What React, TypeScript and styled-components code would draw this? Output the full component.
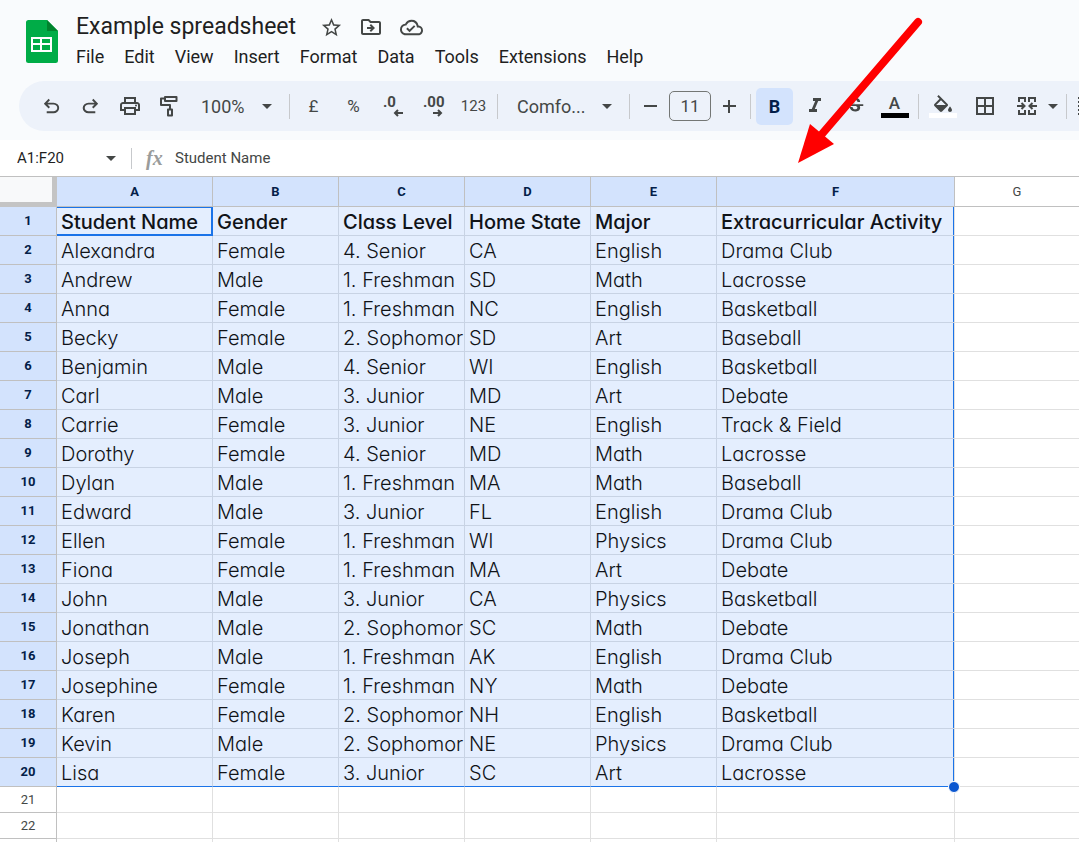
import React from "react";
import styled, { createGlobalStyle, css } from "styled-components";
import {
  MdBorderAll,
  MdFormatItalic,
  MdOutlineCloudDone,
  MdOutlineDriveFileMove,
  MdOutlinePrint,
  MdStarOutline,
  MdStrikethroughS,
} from "react-icons/md";

const ui = `Roboto, "Open Sans", sans-serif`;
const cellFont = `Inter, "Open Sans", sans-serif`;
const ink = "#444746";
const accent = "#1a73e8";
const tint = "#d3e3fd";

const GlobalStyle = createGlobalStyle`
  *, *::before, *::after { box-sizing: border-box; }
  body { margin: 0; background: #fff; font-family: ${ui}; color: #1f1f1f; }
  button, input, select { font: inherit; color: inherit; border: 0; margin: 0; padding: 0; background: transparent; }
  h1 { margin: 0; font-weight: 400; }
`;

const Page = styled.div`
  position: relative;
  display: flex;
  flex-direction: column;
  height: 100vh;
  overflow: hidden;
`;

const Chrome = styled.header`
  background: #f9fbfd;
  padding-bottom: 9px;
`;

const TitleBar = styled.div`
  display: flex;
  align-items: flex-start;
  gap: 8px;
  height: 81px;
  padding: 12px 16px 0 24px;
`;

const Logo = styled.svg`
  width: 36px;
  height: 60px;
  flex: none;
`;

const TitleColumn = styled.div`
  display: flex;
  flex-direction: column;
`;

const TitleRow = styled.div`
  display: flex;
  align-items: center;
  height: 30px;
  padding-left: 8px;
  gap: 15px;
`;

const Title = styled.h1`
  font-size: 23px;
  line-height: 28px;
`;

const TitleActions = styled.div`
  display: flex;
`;

const TitleAction = styled.button`
  display: grid;
  place-items: center;
  width: 40px;
  height: 30px;
  color: ${ink};
`;

const MenuBar = styled.nav`
  display: flex;
  height: 30px;
`;

const MenuButton = styled.button`
  padding: 0 12px 0 8px;
  font-size: 18px;
  line-height: 30px;
`;

const Toolbar = styled.div`
  display: flex;
  align-items: center;
  height: 50px;
  margin-left: 19px;
  padding-left: 14px;
  border-radius: 25px 0 0 25px;
  background: #edf2fa;
  color: ${ink};
  overflow: hidden;
`;

const Group = styled.div<{ $gap?: number }>`
  display: flex;
  align-items: center;
  flex: none;
  gap: ${(p) => p.$gap ?? 3}px;
`;

const Separator = styled.span`
  flex: none;
  width: 1px;
  height: 25px;
  margin: 0 5px;
  background: #c7c9cc;
`;

const ToolButton = styled.button<{ $active?: boolean; $size?: number; $narrow?: boolean }>`
  display: flex;
  flex-direction: column;
  align-items: center;
  justify-content: center;
  flex: none;
  width: ${(p) => (p.$narrow ? 16 : 37)}px;
  height: 37px;
  border-radius: 5px;
  font-size: ${(p) => p.$size ?? 15}px;
  ${(p) =>
    p.$active &&
    css`
      background: ${tint};
      color: #041e49;
      font-weight: 700;
    `}
`;

const Picker = styled.label<{ $width: number }>`
  display: flex;
  align-items: center;
  flex: none;
  width: ${(p) => p.$width}px;
  height: 37px;
  padding: 0 12px 0 14px;
`;

const Select = styled.select`
  appearance: none;
  flex: 1;
  min-width: 0;
  font-size: 18px;
  outline: 0;
`;

const SizeGroup = styled(Group)`
  padding: 0 1px;
`;

const SizeButton = styled.button`
  display: grid;
  place-items: center;
  width: 29px;
  height: 37px;
`;

const SizeInput = styled.input`
  width: 42px;
  height: 30px;
  border: 1px solid #747775;
  border-radius: 5px;
  font-size: 17px;
  text-align: center;
  color: ${ink};
`;

const Decimal = styled.span`
  align-self: flex-start;
  margin-left: 8px;
  font-size: 15px;
  font-weight: 700;
  line-height: 14px;
`;

const DecimalArrow = styled.svg`
  width: 10px;
  height: 8px;
  align-self: flex-end;
  margin-right: 9px;
`;

const ColourBar = styled.span<{ $colour: string }>`
  flex: none;
  width: 28px;
  height: 5px;
  background: ${(p) => p.$colour};
`;

const ColourLetter = styled.span`
  font-size: 17px;
  font-weight: 500;
  line-height: 19px;
`;

const FormulaBar = styled.div`
  display: flex;
  align-items: center;
  height: 37px;
  border-bottom: 1px solid #c0c0c0;
  font-size: 15px;
  background: #fff;
`;

const NameBox = styled.input`
  width: 82px;
  margin-left: 17px;
  font-size: 15px;
  color: #1f1f1f;
`;

const NameMenu = styled.button`
  display: grid;
  place-items: center;
  width: 24px;
  height: 30px;
  color: ${ink};
`;

const FormulaSeparator = styled.span`
  width: 1px;
  height: 21px;
  margin: 0 14px 0 8px;
  background: #c7c9cc;
`;

const Fx = styled.label`
  width: 29px;
  font: italic 700 20px "Liberation Serif", serif;
  color: #9a9c9b;
`;

const FormulaInput = styled.input`
  flex: 1;
  font-size: 15px;
  color: ${ink};
`;

const GridArea = styled.main`
  flex: 1;
  min-height: 0;
  overflow: hidden;
`;

const Sheet = styled.table`
  width: 100%;
  table-layout: fixed;
  border-collapse: separate;
  border-spacing: 0;

  tr > :last-child {
    border-right-width: 0;
  }
`;

const Column = styled.col<{ $width?: number }>`
  width: ${(p) => (p.$width ? `${p.$width}px` : "auto")};
`;

const Corner = styled.td`
  height: 30px;
  padding: 0;
  background: #f8f9fa;
  border: solid #c4c4c4;
  border-width: 0 5px 5px 0;
`;

const HeadCell = styled.th<{ $selected?: boolean }>`
  padding: 0;
  border: solid #c0c0c0;
  border-width: 0 1px 1px 0;
  font-size: 13px;
  line-height: 16px;
  text-align: center;
  font-weight: ${(p) => (p.$selected ? 700 : 400)};
  color: ${(p) => (p.$selected ? "#041e49" : ink)};
  background: ${(p) => (p.$selected ? tint : "#fff")};
`;

const Cell = styled.td<{ $selected?: boolean; $heading?: boolean; $active?: boolean; $right?: boolean; $bottom?: boolean }>`
  position: relative;
  height: ${(p) => (p.$selected ? 29 : 26)}px;
  padding: ${(p) => (p.$selected ? "2px 0 0 4px" : "0")};
  border: solid ${(p) => (p.$selected ? "#c8d3e4" : "#e0e0e0")};
  border-width: 0 1px 1px 0;
  background: ${(p) => (p.$selected ? "#e4eefe" : "#fff")};
  font-family: ${cellFont};
  font-feature-settings: "cv11";
  font-size: 20px;
  line-height: 24px;
  font-weight: ${(p) => (p.$heading ? 500 : 300)};
  color: #101318;
  white-space: nowrap;
  ${(p) => p.$right && css`box-shadow: inset -1px 0 ${accent}; border-right-color: #e0e0e0;`}
  ${(p) => p.$bottom && css`border-bottom-color: ${accent};`}
  ${(p) =>
    p.$active &&
    css`
      border-color: ${accent};
      box-shadow: inset -1px -1px ${accent}, inset 0 1px ${accent};
    `}
`;

const CellText = styled.div`
  overflow: hidden;
`;

const FillHandle = styled.span`
  position: absolute;
  z-index: 1;
  right: -6px;
  bottom: -7px;
  width: 12px;
  height: 12px;
  border: 1px solid #fff;
  border-radius: 50%;
  background: #0b57d0;
`;

const Pointer = styled.svg`
  position: absolute;
  left: 790px;
  top: 10px;
  width: 140px;
  height: 160px;
  pointer-events: none;
`;

const Caret = () => (
  <svg width="10" height="5" viewBox="0 0 10 5" aria-hidden="true">
    <path d="M0 0h10L5 5z" fill={ink} />
  </svg>
);

const Symbol = ({ d }: { d: string }) => (
  <svg width="23" height="23" viewBox="0 -960 960 960" fill="currentColor" aria-hidden="true">
    <path d={d} />
  </svg>
);

const undoPath =
  "M280-200v-80h284q63 0 109.5-40T720-420q0-60-46.5-100T564-560H312l104 104-56 56-200-200 200-200 56 56-104 104h252q97 0 169.5 63T800-420q0 94-72.5 157T564-200H280Z";
const redoPath =
  "M396-200q-97 0-169.5-63T154-420q0-94 72.5-157T396-640h252L544-744l56-56 200 200-200 200-56-56 104-104H396q-63 0-109.5 40T240-420q0 60 46.5 100T396-280h284v80H396Z";

const RollerIcon = () => (
  <svg width="20" height="22" viewBox="0 0 20 22" fill="none" stroke="currentColor" strokeWidth="2" aria-hidden="true">
    <path d="M6 2h11.500v4H6zM6 3.500H2V10h9v4M9 14.500h4V20.500H9z" strokeLinejoin="round" />
  </svg>
);

const FillIcon = () => (
  <svg width="24" height="19" viewBox="0 -1 24 19" fill="currentColor" aria-hidden="true">
    <path d="M16.560 8.940 7.620 0 6.210 1.410l2.380 2.380-5.150 5.150a1.490 1.490 0 0 0 0 2.120l5.500 5.500c.290.290.680.440 1.060.440s.770-.150 1.060-.440l5.500-5.500c.590-.580.590-1.530 0-2.120zM5.210 10 10 5.210 14.790 10H5.210zM19 11.500s-2 2.170-2 3.500c0 1.100.9 2 2 2s2-.9 2-2c0-1.330-2-3.500-2-3.500z" />
  </svg>
);

const MergeIcon = () => (
  <svg width="20" height="18" viewBox="0 0 20 18" fill="none" stroke="currentColor" strokeWidth="2" aria-hidden="true">
    <path d="M8 5V1H2v4M2 13v4h6v-4M12 5V1h6v4M18 13v4h-6v-4M0 9h7M4.500 6l3 3-3 3M20 9h-7M15.500 6l-3 3 3 3" />
  </svg>
);

const AlignIcon = () => (
  <svg width="26" height="18" viewBox="0 0 26 18" stroke="currentColor" strokeWidth="2" aria-hidden="true">
    <path d="M0 1h22M0 5h16M0 9h22M0 13h16M0 17h22" />
  </svg>
);

const menus = ["File", "Edit", "View", "Insert", "Format", "Data", "Tools", "Extensions", "Help"];
const letters = ["A", "B", "C", "D", "E", "F", "G"];
const widths = [57, 156, 126, 126, 126, 126, 238, undefined];

const rows: string[][] = [
  ["Student Name", "Gender", "Class Level", "Home State", "Major", "Extracurricular Activity"],
  ["Alexandra", "Female", "4. Senior", "CA", "English", "Drama Club"],
  ["Andrew", "Male", "1. Freshman", "SD", "Math", "Lacrosse"],
  ["Anna", "Female", "1. Freshman", "NC", "English", "Basketball"],
  ["Becky", "Female", "2. Sophomor", "SD", "Art", "Baseball"],
  ["Benjamin", "Male", "4. Senior", "WI", "English", "Basketball"],
  ["Carl", "Male", "3. Junior", "MD", "Art", "Debate"],
  ["Carrie", "Female", "3. Junior", "NE", "English", "Track & Field"],
  ["Dorothy", "Female", "4. Senior", "MD", "Math", "Lacrosse"],
  ["Dylan", "Male", "1. Freshman", "MA", "Math", "Baseball"],
  ["Edward", "Male", "3. Junior", "FL", "English", "Drama Club"],
  ["Ellen", "Female", "1. Freshman", "WI", "Physics", "Drama Club"],
  ["Fiona", "Female", "1. Freshman", "MA", "Art", "Debate"],
  ["John", "Male", "3. Junior", "CA", "Physics", "Basketball"],
  ["Jonathan", "Male", "2. Sophomor", "SC", "Math", "Debate"],
  ["Joseph", "Male", "1. Freshman", "AK", "English", "Drama Club"],
  ["Josephine", "Female", "1. Freshman", "NY", "Math", "Debate"],
  ["Karen", "Female", "2. Sophomor", "NH", "English", "Basketball"],
  ["Kevin", "Male", "2. Sophomor", "NE", "Physics", "Drama Club"],
  ["Lisa", "Female", "3. Junior", "SC", "Art", "Lacrosse"],
];
const emptyRows = [21, 22];

export default function App() {
  return (
    <Page>
      <GlobalStyle />
      <Chrome>
        <TitleBar>
          <Logo viewBox="0 0 36 60" aria-label="Sheets">
            <path d="M4.500 8H23l11 11v29.500a2.500 2.500 0 0 1-2.500 2.500h-27A2.500 2.500 0 0 1 2 48.500v-38A2.500 2.500 0 0 1 4.500 8z" fill="#00ac47" />
            <path d="M23 8l11 11H23z" fill="#00832d" />
            <path d="M7 25h21v15H7zM9 27v4h7v-4zM18 27v4h8v-4zM9 33v5h7v-5zM18 33v5h8v-5z" fill="#fff" fillRule="evenodd" />
          </Logo>
          <TitleColumn>
            <TitleRow>
              <Title>Example spreadsheet</Title>
              <TitleActions>
                <TitleAction aria-label="Star"><MdStarOutline size={23} /></TitleAction>
                <TitleAction aria-label="Move"><MdOutlineDriveFileMove size={24} /></TitleAction>
                <TitleAction aria-label="Document status"><MdOutlineCloudDone size={23} /></TitleAction>
              </TitleActions>
            </TitleRow>
            <MenuBar>
              {menus.map((m) => (
                <MenuButton key={m}>{m}</MenuButton>
              ))}
            </MenuBar>
          </TitleColumn>
        </TitleBar>
        <Toolbar role="toolbar">
          <Group $gap={2}>
            <ToolButton aria-label="Undo"><Symbol d={undoPath} /></ToolButton>
            <ToolButton aria-label="Redo"><Symbol d={redoPath} /></ToolButton>
            <ToolButton aria-label="Print"><MdOutlinePrint size={24} /></ToolButton>
            <ToolButton aria-label="Paint format"><RollerIcon /></ToolButton>
          </Group>
          <Picker $width={97}>
            <Select aria-label="Zoom"><option>100%</option></Select>
            <Caret />
          </Picker>
          <Separator />
          <Group>
            <ToolButton $size={17}>£</ToolButton>
            <ToolButton $size={17}>%</ToolButton>
            <ToolButton aria-label="Decrease decimal places">
              <Decimal>.0</Decimal>
              <DecimalArrow viewBox="0 0 10 8" fill="none" stroke="currentColor" strokeWidth="2">
                <path d="M10 4H2M5 1L2 4l3 3" />
              </DecimalArrow>
            </ToolButton>
            <ToolButton aria-label="Increase decimal places">
              <Decimal>.00</Decimal>
              <DecimalArrow viewBox="0 0 10 8" fill="none" stroke="currentColor" strokeWidth="2">
                <path d="M0 4h8M5 1l3 3-3 3" />
              </DecimalArrow>
            </ToolButton>
            <ToolButton>123</ToolButton>
          </Group>
          <Separator />
          <Picker $width={121}>
            <Select aria-label="Font"><option>Comfo...</option></Select>
            <Caret />
          </Picker>
          <Separator />
          <SizeGroup $gap={4}>
            <SizeButton aria-label="Decrease font size">
              <svg width="13" height="13" viewBox="0 0 13 13" stroke="currentColor" strokeWidth="2"><path d="M0 6h13" /></svg>
            </SizeButton>
            <SizeInput aria-label="Font size" defaultValue="11" />
            <SizeButton aria-label="Increase font size">
              <svg width="13" height="13" viewBox="0 0 13 13" stroke="currentColor" strokeWidth="2"><path d="M0 6h13M6 0v13" /></svg>
            </SizeButton>
          </SizeGroup>
          <Separator />
          <Group>
            <ToolButton $active $size={18}>B</ToolButton>
            <ToolButton aria-label="Italic"><MdFormatItalic size={24} /></ToolButton>
            <ToolButton aria-label="Strikethrough"><MdStrikethroughS size={22} /></ToolButton>
            <ToolButton aria-label="Text colour">
              <ColourLetter>A</ColourLetter>
              <ColourBar $colour="#000" />
            </ToolButton>
          </Group>
          <Separator />
          <Group $gap={5}>
            <ToolButton aria-label="Fill colour">
              <FillIcon />
              <ColourBar $colour="#fff" />
            </ToolButton>
            <ToolButton aria-label="Borders"><MdBorderAll size={24} /></ToolButton>
            <Group $gap={0}>
              <ToolButton aria-label="Merge cells"><MergeIcon /></ToolButton>
              <ToolButton aria-label="Merge type" $narrow><Caret /></ToolButton>
            </Group>
          </Group>
          <Separator />
          <ToolButton aria-label="Align"><AlignIcon /></ToolButton>
        </Toolbar>
      </Chrome>
      <FormulaBar>
        <NameBox aria-label="Name box" defaultValue="A1:F20" />
        <NameMenu aria-label="Named ranges"><Caret /></NameMenu>
        <FormulaSeparator />
        <Fx htmlFor="formula">fx</Fx>
        <FormulaInput id="formula" defaultValue="Student Name" />
      </FormulaBar>
      <GridArea>
        <Sheet>
          <colgroup>
            {widths.map((w, i) => (
              <Column key={i} $width={w} />
            ))}
          </colgroup>
          <thead>
            <tr>
              <Corner />
              {letters.map((l) => (
                <HeadCell key={l} scope="col" $selected={l !== "G"}>{l}</HeadCell>
              ))}
            </tr>
          </thead>
          <tbody>
            {rows.map((row, r) => {
              const last = r === rows.length - 1;
              return (
                <tr key={r}>
                  <HeadCell scope="row" $selected>{r + 1}</HeadCell>
                  {row.map((text, c) => (
                    <Cell
                      key={c}
                      $selected
                      $heading={r === 0}
                      $active={r === 0 && c === 0}
                      $right={c === 5}
                      $bottom={last}
                    >
                      <CellText>{text}</CellText>
                      {last && c === 5 && <FillHandle />}
                    </Cell>
                  ))}
                  <Cell />
                </tr>
              );
            })}
            {emptyRows.map((n) => (
              <tr key={n}>
                <HeadCell scope="row">{n}</HeadCell>
                {letters.map((l) => (
                  <Cell key={l} />
                ))}
              </tr>
            ))}
            <tr>
              <HeadCell />
              {letters.map((l) => (
                <Cell key={l} />
              ))}
            </tr>
          </tbody>
        </Sheet>
      </GridArea>
      <Pointer viewBox="0 0 140 160" aria-hidden="true">
        <path d="M128 12L32 124" stroke="#f00" strokeWidth="8" strokeLinecap="round" />
        <path d="M8 153l12-39 24 20z" fill="#f00" />
      </Pointer>
    </Page>
  );
}
